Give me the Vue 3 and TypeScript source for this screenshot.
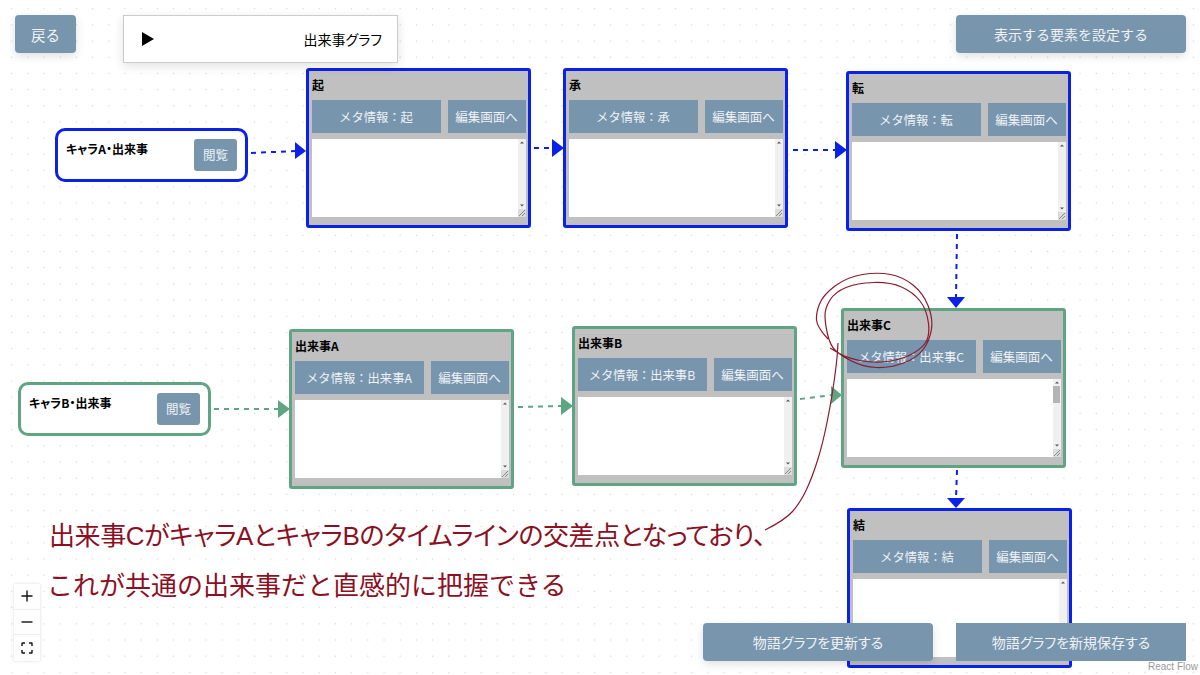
<script setup lang="ts">
interface FlowNode {
  id: string
  title: string
  x: number
  y: number
  tone: 'blue' | 'green'
  thumb?: boolean
}
interface Edge {
  tone: 'blue' | 'green'
  d: string
  arrow: string
}

const nodes: FlowNode[] = [
  { id: 'a', title: '起', x: 306, y: 68, tone: 'blue' },
  { id: 'b', title: '承', x: 563, y: 68, tone: 'blue' },
  { id: 'c', title: '転', x: 846, y: 71, tone: 'blue' },
  { id: 'd', title: '出来事A', x: 289, y: 329, tone: 'green' },
  { id: 'e', title: '出来事B', x: 572, y: 326, tone: 'green' },
  { id: 'f', title: '出来事C', x: 841, y: 308, tone: 'green', thumb: true },
  { id: 'g', title: '結', x: 847, y: 508, tone: 'blue' },
]

const starts = [
  { title: 'キャラA・出来事', x: 55, y: 128, tone: 'blue' },
  { title: 'キャラB・出来事', x: 18, y: 382, tone: 'green' },
]

const edges: Edge[] = [
  { tone: 'blue', d: 'M251 153 L296 151', arrow: '295,142 306,151 295,159' },
  { tone: 'blue', d: 'M534 148 L553 148', arrow: '552,139 564,148 552,157' },
  { tone: 'blue', d: 'M793 150 L836 150', arrow: '835,141 847,150 835,159' },
  { tone: 'blue', d: 'M957 234 L956 298', arrow: '947,297 965,297 956,308' },
  { tone: 'blue', d: 'M957 470 L956 499', arrow: '947,498 965,498 956,508' },
  { tone: 'green', d: 'M214 409 L279 409', arrow: '278,400 290,409 278,418' },
  { tone: 'green', d: 'M518 407 L562 406', arrow: '561,397 573,406 561,415' },
  { tone: 'green', d: 'M800 399 L832 395', arrow: '831,386 842,395 831,404' },
]

const tail: [number, number][] = [
  [765, 530], [785, 520], [800, 503], [812, 478], [823, 443], [832, 397], [837, 360], [838, 343],
]
const loops: [number, number][] = [
  [828, 339], [817, 327], [816, 313], [823, 295], [847, 277], [878, 272], [903, 277], [923, 293],
  [933, 318], [930, 340], [917, 358], [890, 368], [863, 367], [840, 355], [830, 345], [825, 323],
  [825, 308], [835, 292], [857, 283], [890, 282], [913, 292], [927, 310], [930, 337], [920, 350],
  [900, 360], [873, 363], [847, 358], [830, 348],
]

function smooth(points: [number, number][]): string {
  let d = `M${points[0][0]} ${points[0][1]}`
  for (let i = 1; i < points.length - 1; i++) {
    const [x, y] = points[i]
    const [nx, ny] = points[i + 1]
    d += ` Q${x} ${y} ${(x + nx) / 2} ${(y + ny) / 2}`
  }
  const last = points[points.length - 1]
  return `${d} L${last[0]} ${last[1]}`
}

const scribble = `${smooth(tail)} ${smooth(loops)}`
</script>

<template>
  <div class="canvas">
    <svg class="edges" width="1200" height="675" viewBox="0 0 1200 675">
      <g v-for="(edge, i) in edges" :key="i" :class="edge.tone">
        <path class="edge" :d="edge.d" />
        <polygon class="head" :points="edge.arrow" />
      </g>
    </svg>

    <div
      v-for="s in starts"
      :key="s.title"
      class="start"
      :class="s.tone"
      :style="{ left: s.x + 'px', top: s.y + 'px' }"
    >
      <span class="start-title">{{ s.title }}</span>
      <button class="view">閲覧</button>
    </div>

    <div
      v-for="n in nodes"
      :key="n.id"
      class="node"
      :class="n.tone"
      :style="{ left: n.x + 'px', top: n.y + 'px' }"
    >
      <div class="node-title">{{ n.title }}</div>
      <div class="node-actions">
        <button class="meta">メタ情報：{{ n.title }}</button>
        <button class="edit">編集画面へ</button>
      </div>
      <div class="area">
        <div class="bar">
          <svg class="tick" width="7" height="7" viewBox="0 0 7 7"><path d="M1.5 4.5 L3.5 2.5 L5.5 4.5 Z" /></svg>
          <div class="track"><div v-if="n.thumb" class="thumb"></div></div>
          <svg class="tick" width="7" height="7" viewBox="0 0 7 7"><path d="M1.5 2.5 L5.5 2.5 L3.5 4.5 Z" /></svg>
          <svg class="grip" width="8" height="8" viewBox="0 0 8 8"><path d="M1 7 L7 1 M4 7 L7 4" /></svg>
        </div>
      </div>
    </div>

    <svg class="ink" width="1200" height="675" viewBox="0 0 1200 675">
      <path :d="scribble" />
    </svg>

    <div class="note">
      <p class="note-one">出来事CがキャラAとキャラBのタイムラインの交差点となっており、</p>
      <p class="note-two">これが共通の出来事だと直感的に把握できる</p>
    </div>

    <header class="top">
      <button class="btn back">戻る</button>
      <div class="panel">
        <svg class="play" width="14" height="16" viewBox="0 0 14 16"><path d="M1 1 L13 8 L1 15 Z" /></svg>
        <span class="panel-title">出来事グラフ</span>
      </div>
      <button class="btn wide right">表示する要素を設定する</button>
    </header>

    <footer class="bottom">
      <button class="btn wide fit">物語グラフを更新する</button>
      <button class="btn wide fit square">物語グラフを新規保存する</button>
    </footer>

    <div class="controls">
      <button class="ctl">
        <svg width="12" height="12" viewBox="0 0 12 12"><path d="M6 0.5 V11.5 M0.5 6 H11.5" /></svg>
      </button>
      <button class="ctl">
        <svg width="12" height="12" viewBox="0 0 12 12"><path d="M0.5 6 H11.5" /></svg>
      </button>
      <button class="ctl">
        <svg width="12" height="12" viewBox="0 0 12 12">
          <path d="M1 4 V1.5 Q1 1 1.5 1 H4 M8 1 H10.500 Q11 1 11 1.5 V4 M11 8 V10.500 Q11 11 10.500 11 H8 M4 11 H1.500 Q1 11 1 10.500 V8" />
        </svg>
      </button>
    </div>

    <div class="credit">React Flow</div>
  </div>
</template>

<style>
html,
body {
  margin: 0;
  background: #fff;
}
</style>

<style scoped>
.canvas {
  position: relative;
  width: 1200px;
  height: 675px;
  overflow: hidden;
  background-color: #fff;
  background-image: radial-gradient(circle, #d6d6d6 0.7px, transparent 1px);
  background-size: 16.2px 16.2px;
  background-position: 3.6px 0.6px;
  font-family: "Noto Sans CJK JP", "Noto Sans", sans-serif;
  color: #000;
}
button {
  font-family: inherit;
  border: none;
  padding: 0;
  background: #7895ae;
  color: #eef2f5;
  white-space: nowrap;
}
.edges,
.ink {
  position: absolute;
  left: 0;
  top: 0;
  pointer-events: none;
}
.edge {
  fill: none;
  stroke-width: 2;
  stroke-dasharray: 5 5;
}
.blue .edge {
  stroke: #0b22e6;
}
.green .edge {
  stroke: #5fa583;
}
.blue .head {
  fill: #0b22e6;
}
.green .head {
  fill: #5fa583;
}
.ink path {
  fill: none;
  stroke: #8c1a2e;
  stroke-width: 1.2;
}

.node {
  position: absolute;
  box-sizing: border-box;
  width: 225px;
  height: 160px;
  padding: 0 2.5px 8px;
  display: flex;
  flex-direction: column;
  background: #c0c0c0;
  border: 3px solid;
  border-radius: 3px;
}
.node.blue {
  border-color: #0b22e6;
}
.node.green {
  border-color: #5fa583;
}
.node-title {
  height: 29px;
  display: flex;
  align-items: center;
  padding-left: 0.5px;
  padding-bottom: 3px;
  box-sizing: border-box;
  font-size: 12px;
  font-weight: 700;
}
.node-actions {
  display: flex;
  gap: 7px;
  height: 33px;
}
.meta {
  flex: 1;
  font-size: 12.3px;
}
.edit {
  width: 78px;
  font-size: 12.5px;
}
.area {
  flex: 1;
  margin-top: 6px;
  background: #fff;
  display: flex;
  justify-content: flex-end;
}
.bar {
  position: relative;
  width: 8px;
  background: #f0f0f0;
  display: flex;
  flex-direction: column;
  padding-bottom: 8px;
}
.track {
  flex: 1;
}
.thumb {
  height: 17px;
  margin: 0 0.5px;
  background: #b4b4b4;
}
.tick {
  flex: none;
  display: block;
  width: 8px;
}
.tick path {
  fill: #555;
}
.grip {
  position: absolute;
  right: 0;
  bottom: 0;
  background: #dcdcdc;
}
.grip path {
  stroke: #888;
  stroke-width: 1;
  fill: none;
}

.start {
  position: absolute;
  box-sizing: border-box;
  width: 193px;
  height: 54px;
  padding: 8px;
  background: #fff;
  border: 3px solid;
  border-radius: 10px;
  display: flex;
  justify-content: space-between;
}
.start.blue {
  border-color: #0b22e6;
}
.start.green {
  border-color: #5fa583;
}
.start-title {
  font-size: 12px;
  font-weight: 700;
  line-height: 20px;
  font-feature-settings: "palt";
}
.view {
  width: 43px;
  height: 32px;
  border-radius: 3px;
  font-size: 12.5px;
  padding-bottom: 2px;
}

.note {
  position: absolute;
  left: 47px;
  top: 516px;
  color: #8c1024;
  font-size: 26px;
  line-height: 40px;
  font-weight: 400;
  white-space: nowrap;
  font-family: "Liberation Sans", "Noto Sans CJK JP", sans-serif;
}
.note p {
  margin: 0;
}
.note-one {
  padding-left: 2px;
  letter-spacing: -0.4px;
  font-feature-settings: "palt";
  height: 40px;
}
.note-two {
  margin-top: 10px !important;
  font-size: 26px;
}

.top {
  position: absolute;
  left: 15px;
  right: 14px;
  top: 15px;
  display: flex;
  align-items: flex-start;
}
.btn {
  height: 38px;
  border-radius: 4px;
  font-size: 14px;
  box-shadow: 0 3px 10px rgba(0, 0, 0, 0.13);
}
.back {
  width: 61px;
  font-size: 14.5px;
}
.wide {
  width: 230px;
}
.fit {
  font-feature-settings: "palt";
}
.right {
  margin-left: auto;
}
.panel {
  box-sizing: border-box;
  width: 275px;
  height: 48px;
  margin-left: 47px;
  padding: 0 15px 0 17px;
  display: flex;
  align-items: center;
  justify-content: space-between;
  background: #fff;
  border: 1px solid #ccc;
  box-shadow: 0 3px 10px rgba(0, 0, 0, 0.12);
  font-size: 14px;
}
.panel-title {
  font-feature-settings: "palt";
}
.play {
  fill: #000;
}

.bottom {
  position: absolute;
  left: 703px;
  top: 623px;
  display: flex;
  gap: 23px;
}
.square {
  border-radius: 0;
  box-shadow: none;
}

.controls {
  position: absolute;
  left: 14px;
  top: 584px;
  width: 26px;
  display: flex;
  flex-direction: column;
  background: #fefefe;
  box-shadow: 0 0 3px rgba(0, 0, 0, 0.15);
}
.ctl {
  height: 25.6px;
  background: #fefefe;
  border-bottom: 1px solid #eee;
  display: flex;
  align-items: center;
  justify-content: center;
}
.ctl:last-child {
  border-bottom: none;
}
.ctl svg {
  fill: none;
  stroke: #111;
  stroke-width: 1.4;
}

.credit {
  position: absolute;
  right: 2px;
  bottom: 2px;
  font-family: "Liberation Sans", sans-serif;
  font-size: 10px;
  line-height: 12px;
  color: #999;
}
</style>
